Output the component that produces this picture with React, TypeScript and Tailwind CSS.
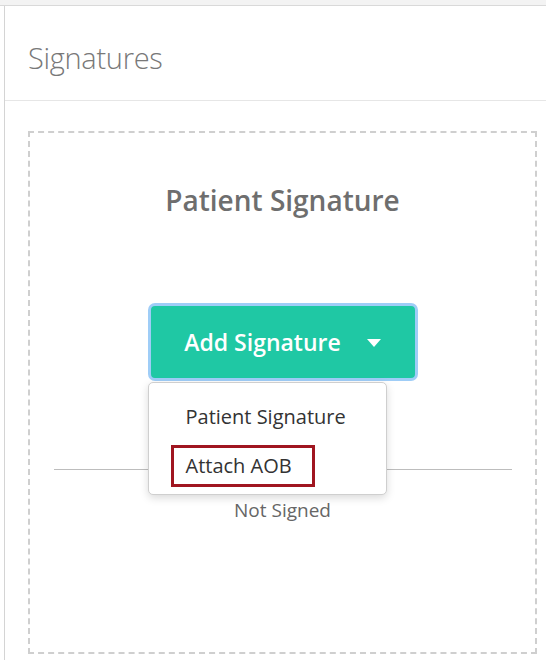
import { useState } from 'react'

export default function App() {
  const [open] = useState(true)

  return (
    <div
      className="w-[546px] h-[660px] overflow-hidden bg-white"
      style={{ fontFamily: '"Open Sans", "Noto Sans", sans-serif' }}
    >
      <div className="h-[6px] bg-[#f3f3f3] border-b border-[#d9d9d9]" />
      <div className="ml-[4px] h-[654px] border-l border-[#d4d4d4] flex flex-col">
        <div className="h-[95px] border-b border-[#e6e6e6] flex items-center pl-[23px]">
          <h2 className="text-[29px] font-light text-[#787878] tracking-[-0.3px] pt-[9px]">Signatures</h2>
        </div>
        <div className="pl-[23px] pr-[9px] pt-[30px] pb-[6px] flex-1 flex">
          <div className="flex-1 border-2 border-dashed border-[#cfcfcf] flex flex-col items-center">
            <h3 className="mt-[46px] text-[28px] font-semibold text-[#6e6e6e]">Patient Signature</h3>
            <div className="relative mt-[82px]">
              <button className="w-[270px] h-[78px] rounded-[7px] bg-[#1fc8a4] border-[3px] border-[#9fcdf7] flex items-center justify-center gap-[26px] text-white text-[23px] font-semibold">
                <span>Add Signature</span>
                <svg width="14" height="8" viewBox="0 0 14 8" className="mt-[2px]">
                  <path d="M0 0h14L7 8z" fill="#fff" />
                </svg>
              </button>
              {open && (
                <div className="absolute left-0 top-[79px] w-[239px] h-[113px] bg-white border border-[#cfcfcf] rounded-[5px] shadow-[0_3px_8px_rgba(0,0,0,0.15)] z-10 pt-[19px]">
                  <div className="pl-[37px] text-[20px] text-[#333] leading-[30px]">Patient Signature</div>
                  <div className="mt-[13px] ml-[22px] w-[144px] h-[42px] border-[3px] border-[#a01620] flex items-center pl-[12px] text-[20px] text-[#333]">
                    Attach AOB
                  </div>
                </div>
              )}
            </div>
            <div className="mt-[88px] w-[458px] border-t border-[#bdbdbd]" />
            <div className="mt-[26px] text-[19px] text-[#666]">Not Signed</div>
          </div>
        </div>
      </div>
    </div>
  )
}
